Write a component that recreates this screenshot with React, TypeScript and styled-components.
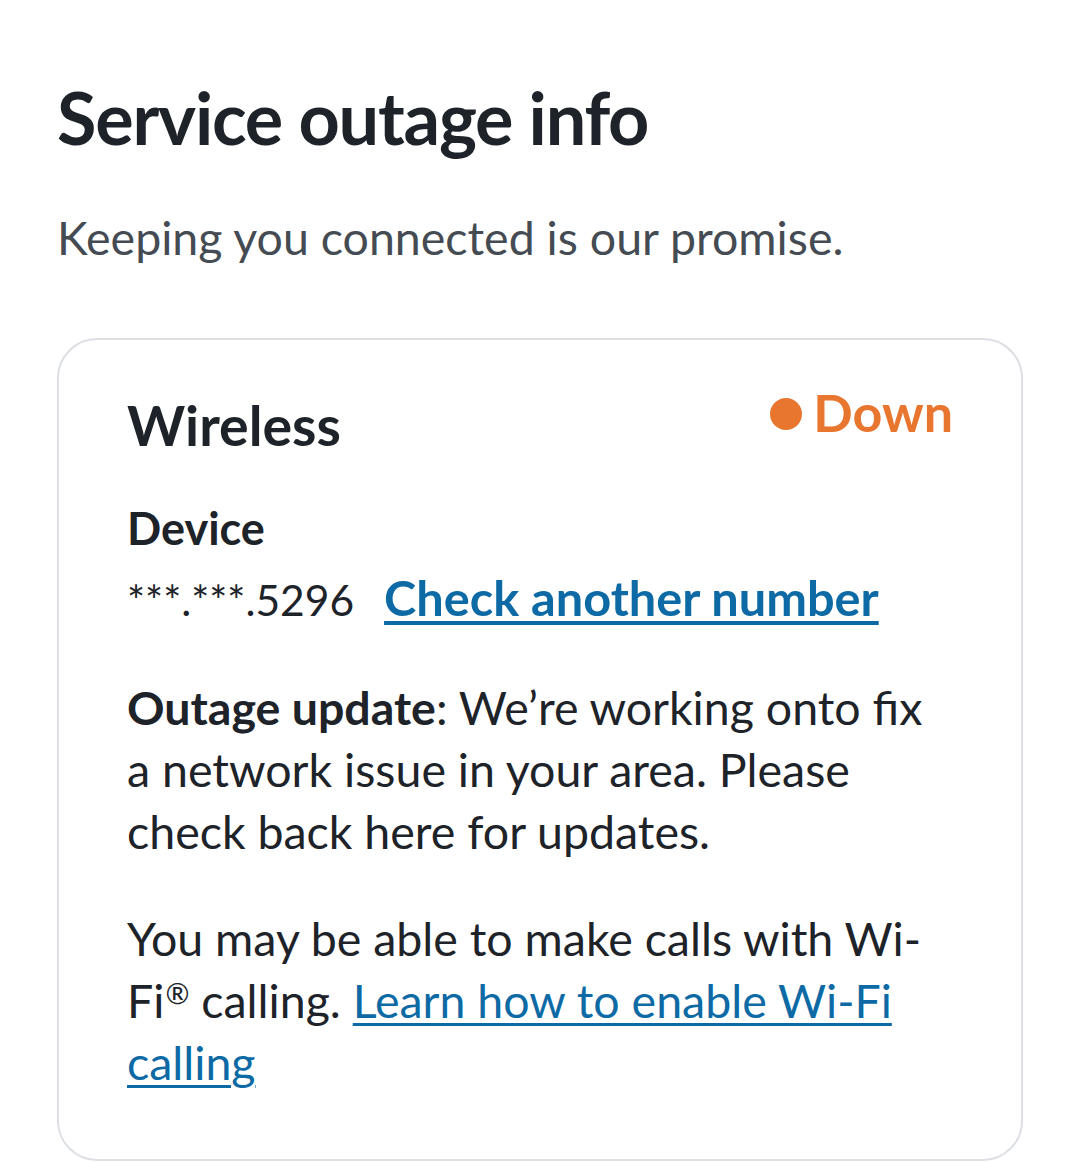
import { createGlobalStyle, styled } from "styled-components"

const GlobalStyle = createGlobalStyle`
  body {
    margin: 0;
    background: #ffffff;
    font-family: Lato, "Liberation Sans", sans-serif;
    color: #1d2329;
  }
`

const Page = styled.main`
  padding: 74px 57px 0 57px;
`

const Heading = styled.h1`
  font-size: 72px;
  font-weight: 700;
  letter-spacing: -1.2px;
  line-height: 1.2;
  margin: 0;
`

const Lead = styled.p`
  font-size: 46.5px;
  color: #454b52;
  line-height: 1.3;
  margin: 47px 0 0 0;
`

const Card = styled.section`
  margin-top: 70px;
  border: 2px solid #dcdfe3;
  border-radius: 40px;
  padding: 52px 68px 66px 68px;
`

const CardHeader = styled.div`
  display: flex;
  justify-content: space-between;
  align-items: flex-start;
`

const CardTitle = styled.h2`
  font-size: 55.5px;
  font-weight: 700;
  margin: 0;
  line-height: 1.2;
`

const Status = styled.div<{ tone: string }>`
  display: flex;
  align-items: center;
  gap: 11px;
  font-size: 52px;
  font-weight: 700;
  color: ${props => props.tone};
  line-height: 1;
  margin-top: -6px;
`

const Dot = styled.span<{ tone: string }>`
  width: 32px;
  height: 32px;
  margin-top: 4px;
  border-radius: 50%;
  background: ${props => props.tone};
`

const Label = styled.h3`
  font-size: 45px;
  font-weight: 700;
  margin: 41px 0 0 0;
  line-height: 1.3;
`

const DeviceRow = styled.div`
  display: flex;
  align-items: baseline;
  gap: 30px;
  margin-top: 8px;
  line-height: 62px;
`

const Masked = styled.span`
  font-size: 42.5px;
`

const Link = styled.a<{ bold?: boolean }>`
  color: #0d6aa5;
  font-weight: ${props => props.bold ? 700 : 400};
  font-size: ${props => props.bold ? '48.7px' : 'inherit'};
  text-decoration: underline;
  text-decoration-thickness: ${props => props.bold ? '4px' : '3px'};
  text-underline-offset: 5px;
`

const Paragraph = styled.p`
  font-size: 46.5px;
  line-height: 62px;
  max-width: 812px;
  margin: 45px 0 0 0;
`

const Registered = styled.span`
  font-size: 0.62em;
  line-height: 0;
  vertical-align: 0.5em;
  margin-left: 1px;
`

const App = () => {
  const orange = "#e8762f"
  return (
    <Page>
      <GlobalStyle />
      <Heading>Service outage info</Heading>
      <Lead>Keeping you connected is our promise.</Lead>
      <Card>
        <CardHeader>
          <CardTitle>Wireless</CardTitle>
          <Status tone={orange}><Dot tone={orange} />Down</Status>
        </CardHeader>
        <Label>Device</Label>
        <DeviceRow>
          <Masked>***.***.5296</Masked>
          <Link bold href="#">Check another number</Link>
        </DeviceRow>
        <Paragraph>
          <b>Outage update</b>: We’re working onto fix a network issue in your area. Please check back here for updates.
        </Paragraph>
        <Paragraph>
          You may be able to make calls with Wi-Fi<Registered>®</Registered> calling. <Link href="#">Learn how to enable Wi-Fi calling</Link>
        </Paragraph>
      </Card>
    </Page>
  )
}

export default App
